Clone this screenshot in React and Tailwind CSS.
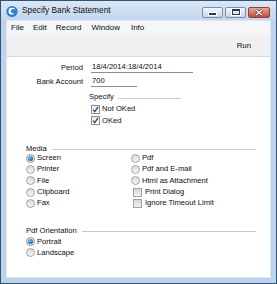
import React from "react";

function Radio({ checked }) {
  return checked ? (
    <span className="w-[9px] h-[9px] rounded-full border border-[#7f96b0] bg-[#e9eef4] flex items-center justify-center shrink-0">
      <span className="w-[5px] h-[5px] rounded-full bg-[radial-gradient(circle_at_40%_35%,#7cc4f2,#1a64ad_70%)]" />
    </span>
  ) : (
    <span className="w-[9px] h-[9px] rounded-full border border-[#a3a3a3] bg-gradient-to-b from-[#d9d9d9] to-[#f7f7f7] shrink-0" />
  );
}

function Check({ checked }) {
  return (
    <span
      className={
        "w-[9px] h-[9px] border shrink-0 flex items-center justify-center " +
        (checked
          ? "border-[#8e8f8f] bg-gradient-to-b from-[#ececec] to-[#ffffff]"
          : "border-[#a0a0a0] bg-gradient-to-b from-[#d5d5d5] to-[#f5f5f5]")
      }
    >
      {checked && (
        <svg width="7" height="7" viewBox="0 0 7 7">
          <path d="M1 3.6 L2.8 5.6 L6 0.8" fill="none" stroke="#2b4c8c" strokeWidth="1.4" />
        </svg>
      )}
    </span>
  );
}

function Opt({ type, checked, label, gap = "ml-[2px]" }) {
  return (
    <div className="flex items-center h-[11.3px]">
      {type === "radio" ? <Radio checked={checked} /> : <Check checked={checked} />}
      <span className={gap}>{label}</span>
    </div>
  );
}

export default function App() {
  return (
    <div
      className="w-[277px] h-[284px] bg-[#bdd3ec] border border-[#2f5572] flex flex-col text-[#0d0d0d]"
      style={{ fontFamily: '"Liberation Sans", Arial, sans-serif' }}
    >
      {/* Title bar */}
      <div className="h-[19px] flex items-center bg-gradient-to-b from-[#dae7f6] to-[#c2d6ee] pl-[5px] pr-[6px]">
        <svg width="12" height="13" viewBox="0 0 12 13" className="mt-[1px]">
          <circle cx="6" cy="6.5" r="5.6" fill="#2f7fcf" />
          <path d="M3 4.2 C4.5 2.2 8.6 2.4 9.3 5 C8 3.6 5.4 3.6 4.8 5.6 C4.3 7.4 6.2 9 8.6 8.2 C6.8 10.6 2.3 9.8 2.5 6.4 C2.6 5.5 2.8 4.8 3 4.2 Z" fill="#ffffff" />
        </svg>
        <span className="ml-[4px] text-[8.3px] text-[#111]">Specify Bank Statement</span>
        <div className="ml-auto flex items-center gap-[2px] mt-[3px]">
          <div className="w-[21px] h-[11px] rounded-[2px] border border-[#7d8fa8] bg-gradient-to-b from-[#f3f6fa] to-[#c9d6e7] flex items-end justify-center pb-[2px]">
            <span className="w-[7px] h-[2px] bg-[#2d3a4c] outline outline-1 outline-[#ffffff]" />
          </div>
          <div className="w-[21px] h-[11px] rounded-[2px] border border-[#7d8fa8] bg-gradient-to-b from-[#f3f6fa] to-[#c9d6e7] flex items-center justify-center">
            <span className="w-[8px] h-[6px] border border-[#2d3a4c] border-t-2 outline outline-1 outline-[#ffffff]" />
          </div>
          <div className="w-[22px] h-[11px] rounded-[2px] border border-[#86433c] bg-gradient-to-b from-[#e7a597] to-[#c4493c] flex items-center justify-center">
            <svg width="8" height="7" viewBox="0 0 8 7">
              <path d="M1 1 L7 6 M7 1 L1 6" stroke="#5a2a26" strokeWidth="2.6" />
              <path d="M1 1 L7 6 M7 1 L1 6" stroke="#ffffff" strokeWidth="1.4" />
            </svg>
          </div>
        </div>
      </div>

      {/* Inner client area */}
      <div className="flex-1 mx-[5px] mb-[5px] border border-[#dce7f4] flex flex-col">
        {/* Menu */}
        <div className="h-[14px] bg-[#f4f6f9] flex items-center text-[8px] pl-[3px]">
          <span className="ml-[1px]">File</span>
          <span className="ml-[9px]">Edit</span>
          <span className="ml-[9px]">Record</span>
          <span className="ml-[10px]">Window</span>
          <span className="ml-[11px]">Info</span>
        </div>
        {/* Toolbar */}
        <div className="h-[22px] bg-[#f0f0f0] border-b border-[#d9d9d9] flex items-center justify-end pr-[19px] text-[7.8px]">
          <span>Run</span>
        </div>
        {/* Body */}
        <div className="flex-1 bg-white text-[7.6px] leading-[10px] flex flex-col">
          {/* Fields */}
          <div className="flex items-end h-[13px] mt-[3px]">
            <span className="w-[76px] text-right">Period</span>
            <span className="ml-[8px] w-[102px] border-b border-[#8d8d8d] pl-[1px] h-[12px] leading-[11px]">18/4/2014:18/4/2014</span>
          </div>
          <div className="flex items-end h-[13px] mt-[1px]">
            <span className="w-[76px] text-right">Bank Account</span>
            <span className="ml-[8px] w-[46px] border-b border-[#8d8d8d] pl-[1px] h-[12px] leading-[11px]">700</span>
          </div>
          {/* Specify */}
          <div className="ml-[82px] mt-[5px] flex items-center h-[10px]">
            <span>Specify</span>
            <span className="ml-[4px] w-[63px] border-t border-[#c8c8c8] mt-[3px]" />
          </div>
          <div className="ml-[84px] mt-[2px] flex flex-col gap-[1.5px]">
            <div className="flex items-center h-[10px]">
              <Check checked />
              <span className="ml-[2px]">Not OKed</span>
            </div>
            <div className="flex items-center h-[10px]">
              <Check checked />
              <span className="ml-[2px]">OKed</span>
            </div>
          </div>

          {/* Media */}
          <div className="ml-[19px] mr-[14px] mt-[18px] flex items-center h-[10px]">
            <span>Media</span>
            <span className="ml-[5px] flex-1 border-t border-[#c8c8c8] mt-[2px]" />
          </div>
          <div className="flex mt-[-1px]">
            <div className="ml-[19px] w-[105px] flex flex-col">
              <Opt type="radio" checked label="Screen" />
              <Opt type="radio" label="Printer" />
              <Opt type="radio" label="File" />
              <Opt type="radio" label="Clipboard" />
              <Opt type="radio" label="Fax" />
            </div>
            <div className="flex flex-col">
              <Opt type="radio" label="Pdf" />
              <Opt type="radio" label="Pdf and E-mail" />
              <Opt type="radio" label="Html as Attachment" />
              <div className="pl-[2px]">
                <Opt type="check" label="Print Dialog" gap="ml-[3px]" />
                <Opt type="check" label="Ignore Timeout Limit" gap="ml-[3px]" />
              </div>
            </div>
          </div>

          {/* Pdf Orientation */}
          <div className="ml-[19px] mr-[14px] mt-[17px] flex items-center h-[10px]">
            <span>Pdf Orientation</span>
            <span className="ml-[5px] flex-1 border-t border-[#c8c8c8] mt-[2px]" />
          </div>
          <div className="ml-[19px] flex flex-col">
            <Opt type="radio" checked label="Portrait" />
            <Opt type="radio" label="Landscape" />
          </div>
        </div>
      </div>
    </div>
  );
}
